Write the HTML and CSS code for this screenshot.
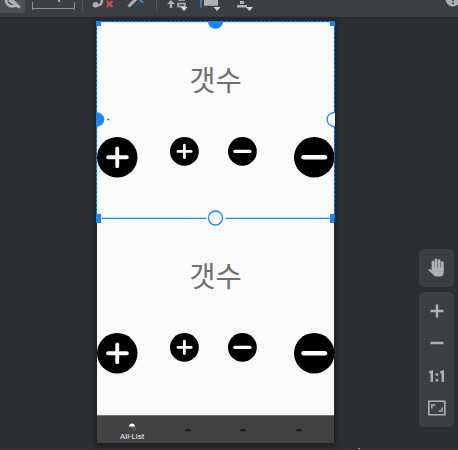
FILE: index.html
```html
<!DOCTYPE html>
<html lang="ko">
<head>
<meta charset="utf-8">
<title>Layout Editor</title>
<link rel="stylesheet" href="styles.css">
</head>
<body>
<svg class="defs" width="0" height="0">
  <symbol id="plus" viewBox="0 0 40 40" overflow="visible"><circle cx="20" cy="20" r="20"/><path class="sign" d="M20 11.200v17.600M10.900 20h18.600"/></symbol>
  <symbol id="minus" viewBox="0 0 40 40" overflow="visible"><circle cx="20" cy="20" r="20"/><path class="sign thick" d="M9.500 20h21"/></symbol>
</svg>
<div class="editor">
  <header class="toolbar">
    <svg width="458" height="17" viewBox="0 0 458 17">
      <path d="M0 0h25v10q0 3-3 3H0z" fill="#4c5052"/>
      <g fill="none" stroke="#afb1b3">
        <path d="M6 0c0 4 3 6.300 6.500 6.300 2 0 4-.8 5.500-2.300" stroke-width="2.800"/>
        <path d="M9 0l11 7.500" stroke-width="2.800"/>
        <path d="M13 0q0 2.500 3.500 2.500" stroke-width="2"/>
        <path d="M32.500 2v8M74.500 2v8M32.500 8.500h42" stroke="#8a8d8f"/>
        <path d="M59 0v2" stroke-width="2"/>
        <path d="M96 5c4 1 6-1 6-5" stroke-width="2.500"/>
        <path d="M128.500 6.500l7.500-7.500" stroke-width="3"/>
        <path d="M178 0h7M178 3.500h7v3h-7z" stroke-width="1.600"/>
      </g>
      <circle cx="95.500" cy="4.800" r="2.800" fill="#afb1b3"/>
      <path d="M106.500 1l6 6M112.500 1l-6 6" stroke="#c75450" stroke-width="2"/>
      <path d="M140 0l3 2.500" stroke="#3592c4" stroke-width="2"/>
      <path d="M82.500 0v12M156.500 0v12" stroke="#515557"/>
      <path d="M171 0l4 4h-2.800v4h-2.500V4H167z" fill="#afb1b3"/>
      <path d="M201 0v7.500" stroke="#3592c4" stroke-width="1.500"/>
      <path d="M204 0h14v5.700h-14zM237 5h10v2.500h-10zM240 1h4v3h-4z" fill="#afb1b3"/>
      <path d="M180.500 7h7l-3.500 4zM213.500 7h7l-3.500 4zM246 7h7l-3.500 4z" fill="#d4d5d6"/>
      <circle cx="453" cy="-1" r="7.500" fill="#afb1b3"/>
      <path d="M453 0v1.200M453 2.500v1.500" stroke="#3c3f41" stroke-width="1.800"/>
    </svg>
  </header>
  <main class="surface">
    <div class="phone">
      <section class="card">
        <h2>갯수</h2>
        <div class="buttons">
          <svg class="big"><use href="#plus"/></svg>
          <svg class="small first"><use href="#plus"/></svg>
          <svg class="small second"><use href="#minus"/></svg>
          <svg class="big last"><use href="#minus"/></svg>
        </div>
      </section>
      <section class="card">
        <h2>갯수</h2>
        <div class="buttons">
          <svg class="big"><use href="#plus"/></svg>
          <svg class="small first"><use href="#plus"/></svg>
          <svg class="small second"><use href="#minus"/></svg>
          <svg class="big last"><use href="#minus"/></svg>
        </div>
      </section>
      <nav class="tabs">
        <div class="tab active"><svg width="10" height="10"><path d="M4 5l3-2 3 4-3 2z" fill="#5a5a5a"/><path d="M2 4.500c0-4 6-4 6 0z" fill="#fff"/></svg><span>All-List</span></div>
        <div class="tab"><svg width="10" height="10"><path d="M2 5.500c0-4 6-4 6 0z" fill="#1f1f1f"/></svg></div>
        <div class="tab"><svg width="10" height="10"><path d="M2 5.500c0-4 6-4 6 0z" fill="#1f1f1f"/></svg></div>
        <div class="tab"><svg width="10" height="10"><path d="M2 5.500c0-4 6-4 6 0z" fill="#1f1f1f"/></svg></div>
      </nav>
      <svg class="selection" width="239" height="206" viewBox="0 0 239 206">
        <g fill="none" stroke="#1886f7">
          <path d="M0 .5h239M.5 0v197M238.500 0v197" stroke="#173a60"/>
          <path d="M0 .5h239M.5 0v197M238.500 0v197" stroke-width="1.300" stroke-dasharray="3 1.300"/>
          <path d="M6 197.400h104M130 197.400h104M11 98.500h2.500" stroke-width="1.400"/>
        </g>
        <path d="M0 0h5v5H0zM234 0h5v5h-5zM0 193h5v9H0zM234 193h4.500v9H234z" fill="#1886f7"/>
        <circle cx="119.500" cy="0" r="7.700" fill="#1886f7"/>
        <circle cx="1" cy="98.500" r="7.200" fill="#1886f7"/>
        <circle cx="238" cy="98.500" r="6.900" fill="#fafafa" stroke="#1886f7" stroke-width="1.300"/>
        <circle cx="119.500" cy="197" r="7" fill="#fafafa" stroke="#1886f7" stroke-width="1.300"/>
      </svg>
    </div>
    <aside class="controls">
      <div class="pan"><svg width="20" height="20" viewBox="0 0 20 20"><path d="M6 11V4M9 10V1.900M12.200 10V2.500M15.400 11V4.500" stroke="#afb1b3" stroke-width="2.700" stroke-linecap="round"/><path d="M4.800 9.500h11.900V14c0 3-1.400 4.500-3.400 4.500H9.500c-2 0-3-1-4-2.500L1.500 12.500c0-1.500 2-1.800 3.300 0z" fill="#afb1b3"/></svg></div>
      <div class="zoom">
        <svg width="35" height="134" viewBox="0 0 35 134" fill="none" stroke="#afb1b3">
          <path d="M18 12.500v13M11.500 19h13M11.500 51h13" stroke-width="2.400"/>
          <path d="M10.300 80.500l2.500-.8V90M21.300 80.500l2.500-.8V90" stroke-width="2.500"/>
          <path d="M16.700 81.300h2.500v2.500h-2.500zM16.700 87h2.500v2.500h-2.500z" fill="#afb1b3" stroke="none"/>
          <path d="M9.800 109.300h16v13.500h-16z" stroke-width="1.600"/>
          <path d="M12.800 116.500V113h3.500M19.500 119H23v-3.500" stroke-width="1.500"/>
        </svg>
      </div>
    </aside>
  </main>
  <footer class="edge"><i></i></footer>
</div>
</body>
</html>
```

FILE: styles.css
```css
* { box-sizing: border-box; }
body { margin: 0; background: #2d2e30; overflow: hidden; font-family: Roboto, "Noto Sans CJK KR", sans-serif; }
svg { display: block; }
.defs { position: absolute; }
.editor { width: 458px; height: 450px; display: flex; flex-direction: column; }
.toolbar { height: 18px; background: #3c3f41; border-bottom: 1px solid #27282a; }
.surface { height: 431px; display: flex; justify-content: space-between; padding: 4px 4px 0 97px; }
.phone { position: relative; width: 237px; height: 421px; background: #fafafa; box-shadow: 0 1px 5px 2px #1d1e1f; }
.card { height: 196px; padding-top: 36px; }
.card h2 { margin: 0; text-align: center; font: 400 28.600px/42px "Noto Sans CJK KR", sans-serif; color: #707070; }
.buttons { display: flex; align-items: flex-start; margin-top: 37px; }
.buttons svg { overflow: visible; }
.sign { stroke: #fff; stroke-width: 3.8; stroke-linecap: round; }
.thick { stroke-width: 4.6; }
.big { width: 40.500px; height: 40.500px; }
.small { width: 28.800px; height: 28.800px; }
.first { margin-left: 32px; }
.second { margin-left: 29.500px; }
.last { margin-left: auto; }
.tabs { height: 28px; margin-top: 1px; background: #424242; border-top: 1px solid #707070; display: flex; padding-left: 7.500px; }
.tab { width: 55.500px; display: flex; flex-direction: column; align-items: center; padding-top: 10px; }
.active { padding-top: 6px; }
.tab span { margin-top: 1px; font-size: 8px; line-height: 8px; color: #eee; white-space: nowrap; }
.selection { position: absolute; left: -1px; top: -1px; }
.controls { width: 35px; margin-top: 227px; }
.pan, .zoom { background: #3c3f41; border-radius: 5px; }
.pan { height: 38px; display: flex; align-items: center; justify-content: center; }
.zoom { height: 135px; margin-top: 5px; }
.edge { height: 1px; background: #353133; padding-left: 358px; }
.edge i { display: block; width: 2px; height: 1px; margin-top: -1px; background: #999; }
```
